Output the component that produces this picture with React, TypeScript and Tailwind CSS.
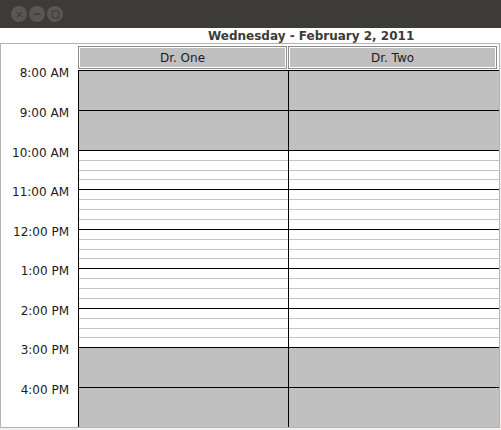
import { X, Minus, Square } from "lucide-react";

type Hour = {
  label: string;
  h: string;
  busy: boolean;
};

const hours: Hour[] = [
  { label: "8:00 AM", h: "h-[40px]", busy: true },
  { label: "9:00 AM", h: "h-[40px]", busy: true },
  { label: "10:00 AM", h: "h-[39px]", busy: false },
  { label: "11:00 AM", h: "h-[40px]", busy: false },
  { label: "12:00 PM", h: "h-[39px]", busy: false },
  { label: "1:00 PM", h: "h-[40px]", busy: false },
  { label: "2:00 PM", h: "h-[39px]", busy: false },
  { label: "3:00 PM", h: "h-[40px]", busy: true },
  { label: "4:00 PM", h: "h-[40px]", busy: true },
];

const doctors = ["Dr. One", "Dr. Two"];

function Cell({ busy, wide }: { busy: boolean; wide: string }) {
  if (busy) {
    return <div className={`${wide} h-full border-l border-t border-black bg-[#c0c0c0]`} />;
  }
  // quarter-hour slots
  return (
    <div className={`${wide} h-full border-l border-t border-black bg-white flex flex-col`}>
      <div className="flex-1" />
      <div className="flex-1 border-t border-[#c4c4c4]" />
      <div className="flex-1 border-t border-[#c4c4c4]" />
      <div className="flex-1 border-t border-[#c4c4c4]" />
    </div>
  );
}

export default function App() {
  return (
    <div className="w-[501px] h-[430px] bg-[#f2f1f0] overflow-hidden flex flex-col font-['DejaVu_Sans',sans-serif] text-[12px] text-[#1c1c1c]">
      {/* window title bar */}
      <div className="h-[28px] bg-[#3c3b37] flex items-center pl-[11px] gap-[2px]">
        <div className="w-[16px] h-[16px] rounded-full bg-[#585753] flex items-center justify-center">
          <X size={9} strokeWidth={2.5} color="#2e2d2a" />
        </div>
        <div className="w-[16px] h-[16px] rounded-full bg-[#585753] flex items-center justify-center">
          <Minus size={10} strokeWidth={2.5} color="#2e2d2a" />
        </div>
        <div className="w-[16px] h-[16px] rounded-full bg-[#585753] flex items-center justify-center">
          <Square size={9} strokeWidth={2} color="#2e2d2a" />
        </div>
      </div>

      <div className="h-[15px] bg-white flex items-center pl-[208px] font-bold text-[#3c3b37] leading-none">
        Wednesday - February 2, 2011
      </div>

      <div className="w-[500px] h-[385px] border border-[#b4b4b4] bg-white flex flex-col">
        {/* header */}
        <div className="h-[26px] flex pt-[2px]">
          <div className="w-[77px]" />
          {doctors.map((d, i) => (
            <div
              key={d}
              className={`w-[209px] h-[23px] border border-[#8c8c8c] ${i === 1 ? "ml-[1px]" : ""}`}
            >
              <div className="w-full h-full border border-white bg-[#c0c0c0] flex items-center justify-center">
                {d}
              </div>
            </div>
          ))}
        </div>

        {hours.map((hr) => (
          <div key={hr.label} className={`${hr.h} flex`}>
            <div className="w-[77px] pr-[9px] text-right leading-[14px] -mt-[4px]">{hr.label}</div>
            <Cell busy={hr.busy} wide="w-[210px]" />
            <Cell busy={hr.busy} wide="flex-1" />
          </div>
        ))}
      </div>
    </div>
  );
}
